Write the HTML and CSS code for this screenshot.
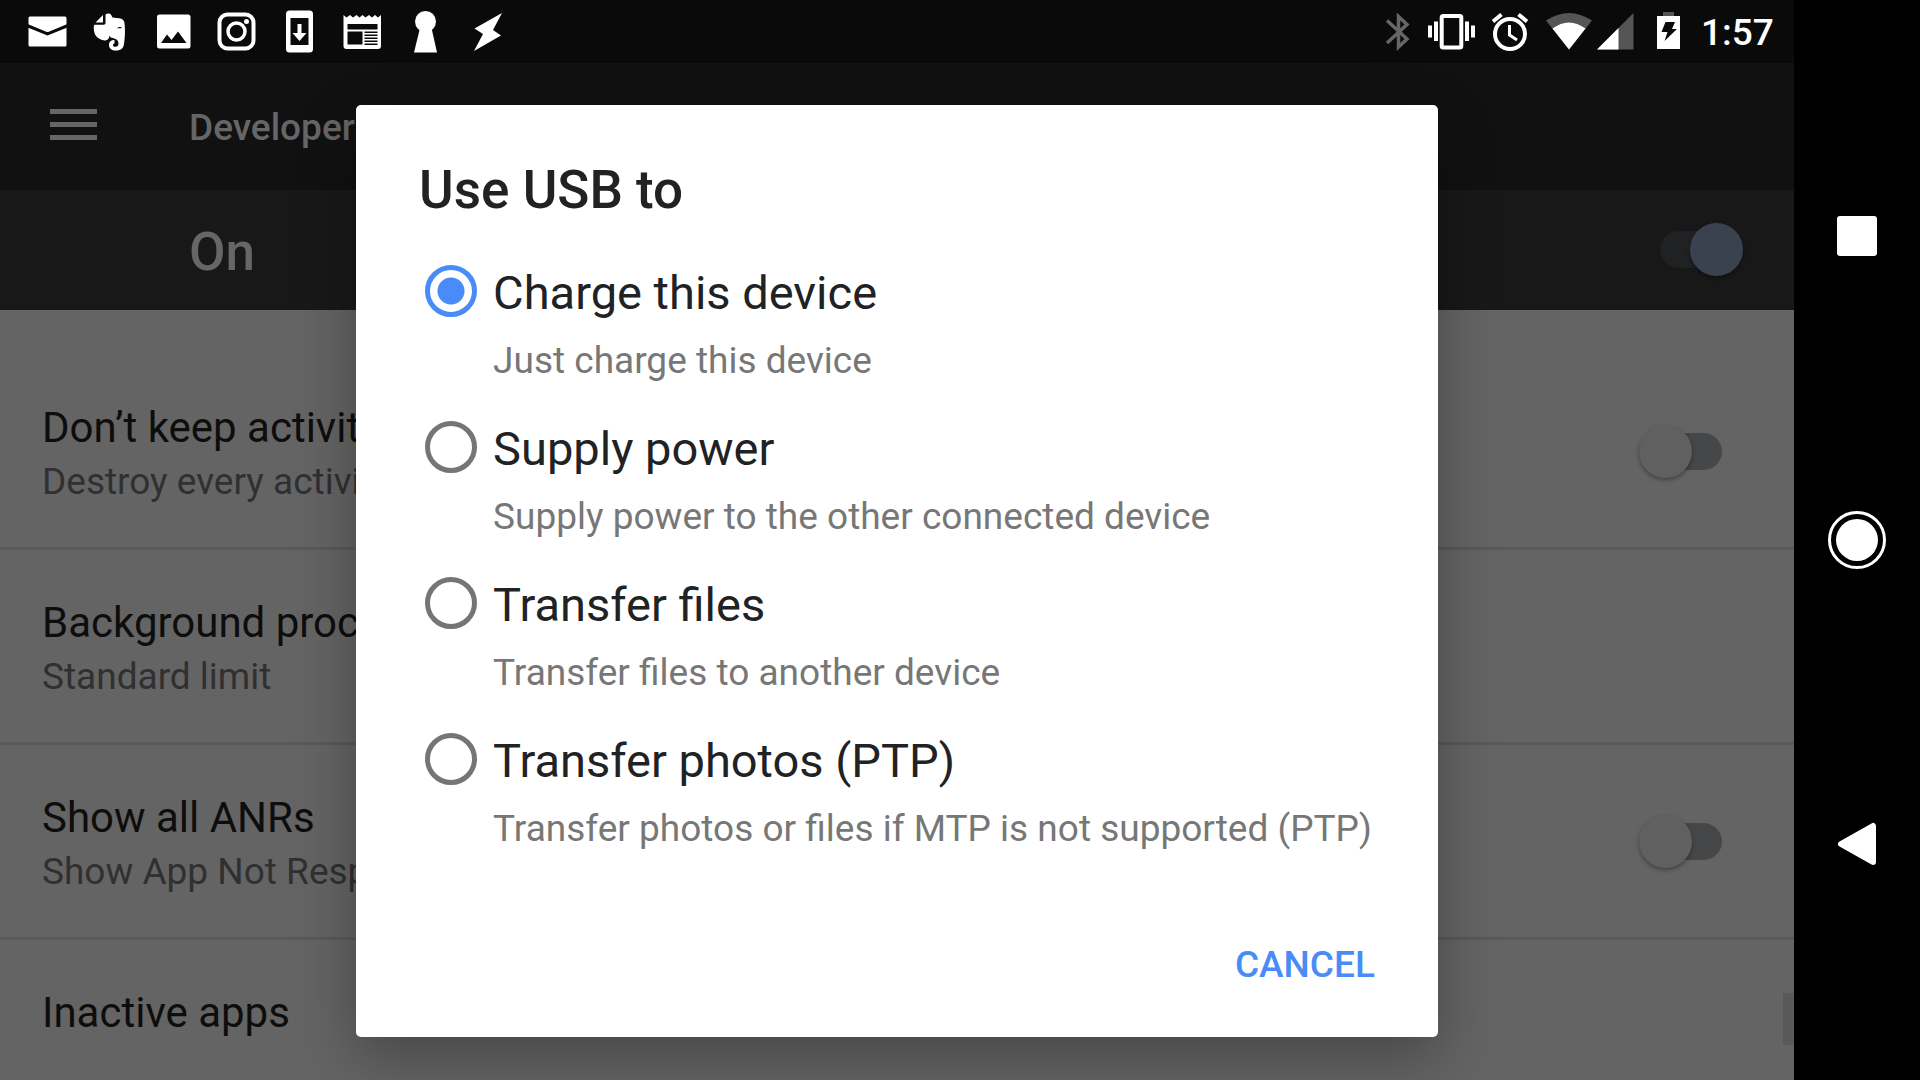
FILE: index.html
```html
<!DOCTYPE html>
<html lang="en">
<head>
<meta charset="utf-8">
<title>Developer options</title>
<link rel="stylesheet" href="styles.css">
</head>
<body>
<div class="device">
  <div class="screen">
    <header class="status">
      <div class="notifications">
        <svg width="63" height="63" viewBox="16 0 63 63"><rect x="28.500" y="16.500" width="38" height="30" rx="1.500" fill="#fff"/><path d="M27 25.500 47.500 34 68 25.500" fill="none" stroke="#0a0a0a" stroke-width="3"/></svg>
        <svg width="63" height="63" viewBox="79 0 63 63"><path fill="#fff" d="M95.500 22.500 103 15v7.500zM105.500 14.500C107 13 110.500 13 111.500 15.500L112.500 17.500 119 18.200C122.500 18.700 124 20 124.400 22.500 125.300 28 125.200 38 123.800 45 123 49 120 50.500 116 50.500 111.500 50.500 109 48.500 109 45 109 41.500 111 40 114.500 40V43.500C112.500 43.500 112.300 46.800 115 46.800 117.800 46.800 118.500 45.500 118.500 43.500 118.500 40 115.500 38.500 111.500 37.800 110.500 37.600 110 36.500 109.500 35.500 109 39.500 107 41 103.500 40.200 97.500 39 94 35.500 93.800 28.500 93.700 26.500 94 25.200 94.500 24.800H103.500C105 24.800 105.500 24 105.500 22.800z"/><path d="M117 28.300C118.500 26.500 121 26.500 122 28.300z" fill="#0a0a0a"/></svg>
        <svg width="63" height="63" viewBox="142 0 63 63"><rect x="157" y="14.500" width="33.500" height="34" rx="2.500" fill="#fff"/><path d="M161 43 167 34.500 171.500 40 178 31.500 186.500 43z" fill="#0a0a0a"/></svg>
        <svg width="63" height="63" viewBox="205 0 63 63" fill="none" stroke="#fff"><rect x="219.500" y="14.500" width="34" height="34" rx="8" stroke-width="4"/><circle cx="236.500" cy="31.500" r="8.500" stroke-width="3.500"/><circle cx="246.500" cy="21.500" r="2.500" fill="#fff" stroke="none"/></svg>
        <svg width="63" height="63" viewBox="268 0 63 63"><rect x="286" y="10.500" width="27" height="42" rx="3.500" fill="#fff"/><path d="M290.500 18h18v27h-18z" fill="#0a0a0a"/><path d="M297.500 24h4v9h5l-7 8-7-8h5z" fill="#fff"/></svg>
        <svg width="63" height="63" viewBox="331 0 63 63"><path fill="#fff" d="M343.500 15 346.500 17.500 350 15 353 17.500 356.500 15 359.500 17.500 362.500 15 365.500 17.500 369 15 372 17.500 375 15 378 17.500 381 15V46Q381 49 378 49H346.500Q343.500 49 343.500 46z"/><path fill="#0a0a0a" d="M347.500 24h30v5.500h-30zM347.500 31.500h15v13h-15zM364.500 31.500h13v1.500h-13zM364.500 34.500h13v1.500h-13zM364.500 37.500h13v1.500h-13zM364.500 40.500h13v1.500h-13zM364.500 43.500h13v1.500h-13z"/></svg>
        <svg width="63" height="63" viewBox="394 0 63 63" fill="#fff"><circle cx="425.500" cy="21.500" r="10.500"/><path d="M420 28h11.500l5.500 24.500h-23z"/></svg>
        <svg width="63" height="63" viewBox="457 0 63 63"><path d="M502 13 493 30 501 35.500 474 51 483 34 474.500 28.500z" fill="#fff"/></svg>
      </div>
      <div class="system">
        <svg width="43" height="63" viewBox="1376 0 43 63"><path d="M1387 20.500 1407 39 1398.500 47V16.500L1407 24.500 1387 43" fill="none" stroke="#666" stroke-width="3.500"/></svg>
        <svg width="64" height="63" viewBox="1419 0 64 63" fill="#fff"><rect x="1441.700" y="16" width="19.600" height="31.500" rx="1.500" fill="none" stroke="#fff" stroke-width="4"/><path d="M1434 21.500h4V41h-4zM1428 25.500h4v12h-4zM1465 21.500h4V41h-4zM1471 25.500h4v12h-4z"/></svg>
        <svg width="54" height="63" viewBox="1483 0 54 63" fill="none" stroke="#fff" stroke-width="4"><circle cx="1510" cy="34" r="15"/><path d="M1493 21.500 1501.500 14.500M1527 21.500 1518.500 14.500"/><path d="M1509.500 25v10l7.500 5" stroke-width="3"/></svg>
        <svg width="58" height="63" viewBox="1537 0 58 63"><path d="M1569 49.500 1546 20.500Q1569 5.500 1592 20.500z" fill="#555"/><path d="M1569 49.500 1552.500 28.500Q1569 16.500 1585.500 28.500z" fill="#fff"/></svg>
        <svg width="50" height="63" viewBox="1595 0 50 63"><path d="M1597 49.500 1633.500 13v36.500z" fill="#555"/><path d="M1597 49.500 1618.500 28v21.500z" fill="#fff"/></svg>
        <svg width="55" height="63" viewBox="1645 0 55 63"><path d="M1663 12h11v4h-11z" fill="#555"/><path d="M1657 16h23v33h-23z" fill="#fff"/><path d="M1665.500 22h9.500l-3 7h5l-12.500 12 3-9h-6z" fill="#0a0a0a"/></svg>
        <time class="clock">1:57</time>
      </div>
    </header>

    <main class="settings">
      <div class="appbar">
        <button class="menu" aria-label="Menu"><svg width="47" height="32" viewBox="0 0 47 32"><path d="M0 0h47v5H0zM0 13h47v5H0zM0 26h47v5H0z" fill="#666"/></svg></button>
        <h1>Developer options</h1>
      </div>
      <label class="master"><span>On</span><input type="checkbox" class="switch" checked></label>
      <div class="list">
        <label class="row">
          <span class="text"><span class="name">Don’t keep activities</span><span class="note">Destroy every activity</span></span>
          <input type="checkbox" class="switch">
        </label>
        <div class="row">
          <span class="text"><span class="name">Background process</span><span class="note">Standard limit</span></span>
        </div>
        <label class="row">
          <span class="text"><span class="name">Show all ANRs</span><span class="note">Show App Not Responding</span></span>
          <input type="checkbox" class="switch">
        </label>
        <div class="row">
          <span class="text"><span class="name">Inactive apps</span></span>
        </div>
      </div>
      <div class="scrollbar"></div>
    </main>

    <div class="overlay">
      <form class="dialog" role="dialog" aria-labelledby="usb-title">
        <h2 id="usb-title">Use USB to</h2>
        <div class="options">
          <label class="option"><input type="radio" name="usb" checked><span class="choice">Charge this device</span><span class="hint">Just charge this device</span></label>
          <label class="option"><input type="radio" name="usb"><span class="choice">Supply power</span><span class="hint">Supply power to the other connected device</span></label>
          <label class="option"><input type="radio" name="usb"><span class="choice">Transfer files</span><span class="hint">Transfer files to another device</span></label>
          <label class="option"><input type="radio" name="usb"><span class="choice">Transfer photos (PTP)</span><span class="hint">Transfer photos or files if MTP is not supported (PTP)</span></label>
        </div>
        <button type="button" class="cancel">CANCEL</button>
      </form>
    </div>
  </div>

  <nav class="navbar">
    <button aria-label="Recent apps"><svg width="60" height="60" viewBox="0 0 60 60"><rect x="10" y="10" width="40" height="40" rx="3" fill="#fff"/></svg></button>
    <button aria-label="Home"><svg width="60" height="60" viewBox="0 0 60 60"><circle cx="30" cy="30" r="27.500" fill="none" stroke="#fff" stroke-width="3"/><circle cx="30" cy="30" r="21" fill="#fff"/></svg></button>
    <button aria-label="Back"><svg width="60" height="60" viewBox="0 0 60 60"><path d="M14 30 46 12V48z" fill="#fff" stroke="#fff" stroke-width="6" stroke-linejoin="round"/></svg></button>
  </nav>
</div>
</body>
</html>
```
FILE: styles.css
```css
* { box-sizing: border-box; }

body {
  margin: 0;
  background: #000;
  font-family: Roboto, "Noto Sans", sans-serif;
}

h1, h2 { margin: 0; font-weight: 500; }

svg { display: block; }

button {
  border: 0;
  padding: 0;
  background: none;
  font: inherit;
}

.device {
  display: flex;
  height: 100vh;
  overflow: hidden;
}

.screen {
  position: relative;
  display: flex;
  flex: 1;
  flex-direction: column;
  min-width: 0;
  overflow: hidden;
  background: #646464;
}

/* Status bar */
.status {
  display: flex;
  flex: none;
  justify-content: space-between;
  height: 63px;
  padding-left: 16px;
  background: #0a0a0a;
}

.notifications, .system { display: flex; }

.clock {
  width: 94px;
  padding-left: 1px;
  color: #fff;
  font-size: 37px;
  font-weight: 500;
  line-height: 66px;
}

/* Settings page behind the dialog */
.settings {
  position: relative;
  flex: 1;
  min-height: 0;
}

.appbar {
  display: flex;
  align-items: center;
  gap: 92px;
  height: 127px;
  padding: 0 50px;
  background: #111;
  color: #666;
}

.menu { padding-bottom: 4px; }

.appbar h1 {
  padding-top: 2px;
  font-size: 37px;
  line-height: 44px;
  white-space: nowrap;
}

.master {
  display: flex;
  align-items: center;
  justify-content: space-between;
  height: 120px;
  padding: 0 51px 0 189px;
  background: #181818;
  color: #666;
  font-size: 53px;
  font-weight: 500;
  line-height: 60px;
}

.master span { padding-top: 4px; }

.list { padding-top: 45px; }

.row {
  display: flex;
  align-items: center;
  justify-content: space-between;
  padding: 48px 72px 43px 42px;
  border-bottom: 3px solid #595959;
}

.text {
  display: flex;
  flex-direction: column;
  gap: 7px;
  white-space: nowrap;
}

.name {
  color: #0d0d0d;
  font-size: 42px;
  line-height: 50px;
}

.note {
  color: #303031;
  font-size: 37px;
  line-height: 44px;
}

.switch {
  position: relative;
  flex: none;
  appearance: none;
  width: 78px;
  height: 37px;
  margin: 0 0 4px;
  border-radius: 19px;
  background: #464748;
}

.switch::before {
  content: "";
  position: absolute;
  top: -8px;
  left: -5px;
  width: 53px;
  height: 53px;
  border-radius: 50%;
  background: #606060;
  box-shadow: 0 2px 4px rgba(0, 0, 0, .35);
}

.switch:checked {
  margin: 0 5px 2px 0;
  background: #1f2123;
}

.switch:checked::before {
  left: 30px;
  background: #3a414f;
}

.scrollbar {
  position: absolute;
  right: 0;
  bottom: 35px;
  width: 11px;
  height: 52px;
  background: #595959;
}

/* USB dialog */
.overlay {
  position: absolute;
  inset: 62px 0 0;
  display: grid;
  place-items: center;
}

.dialog {
  display: flex;
  flex-direction: column;
  width: 60.3%;
  padding: 55px 63px 50px;
  border-radius: 5px;
  background: #fff;
  box-shadow: 0 20px 60px rgba(0, 0, 0, .3);
}

.dialog h2 {
  color: #212224;
  font-size: 53px;
  line-height: 60px;
}

.options {
  display: grid;
  gap: 38px;
  margin-top: 45px;
}

.option {
  display: grid;
  grid-template-columns: 52px 1fr;
  gap: 18px 16px;
  padding-left: 6px;
  white-space: nowrap;
}

.option input {
  appearance: none;
  width: 52px;
  height: 52px;
  margin: 0;
  border: 5px solid #757575;
  border-radius: 50%;
}

.option input:checked {
  border-color: #4a8cf7;
  background: radial-gradient(circle, #4a8cf7 13px, transparent 14px);
}

.choice {
  color: #212224;
  font-size: 47px;
  line-height: 56px;
}

.hint {
  grid-column: 2;
  color: #777;
  font-size: 37px;
  line-height: 44px;
}

.cancel {
  align-self: flex-end;
  margin-top: 92px;
  color: #4a8cf7;
  font-size: 37px;
  font-weight: 500;
  line-height: 44px;
}

/* Navigation bar */
.navbar {
  display: flex;
  flex: none;
  flex-direction: column;
  width: 126px;
  padding: 84px 0;
}

.navbar button {
  display: grid;
  flex: 1;
  place-items: center;
}
```
